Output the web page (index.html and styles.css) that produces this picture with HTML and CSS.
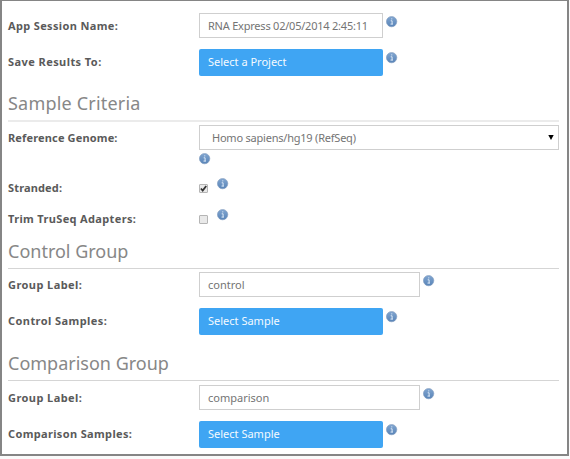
FILE: index.html
```
<!DOCTYPE html>
<html lang="en">
<head>
<meta charset="utf-8">
<title>RNA Express</title>
<link rel="stylesheet" href="styles.css">
</head>
<body>
<svg class="defs" width="0" height="0">
  <defs>
    <linearGradient id="ball" x1="0" y1="0" x2="0" y2="1">
      <stop offset="0" stop-color="#82a6d0"/>
      <stop offset="1" stop-color="#5884b8"/>
    </linearGradient>
    <symbol id="info" viewBox="0 0 12 12">
      <circle cx="5.6" cy="5.6" r="5.2" fill="url(#ball)" stroke="#7f9abd" stroke-width=".6"/>
      <path d="M4.7 4.8h1.4v3.2M4.5 8.1h2.5M5.2 2.9h1.1" fill="none" stroke="#dce9f7" stroke-width="1"/>
    </symbol>
  </defs>
</svg>
<form class="panel">
  <div class="row">
    <span class="label">App Session Name:</span>
    <div class="field short"><span class="tight">RNA Express 02/05/2014 2:45:11</span></div>
    <svg class="info"><use href="#info"/></svg>
  </div>
  <div class="row action">
    <span class="label wide">Save Results To:</span>
    <div class="button">Select a Project</div>
    <svg class="info"><use href="#info"/></svg>
  </div>

  <h2 class="first">Sample Criteria</h2>
  <div class="row select-row">
    <span class="label narrow">Reference Genome:</span>
    <div class="field select"><span class="tight">Homo sapiens/hg19 (RefSeq)</span><svg class="arrow" viewBox="0 0 6 5"><path d="M.3 0h5.4L3 5z"/></svg></div>
  </div>
  <div class="hint"><svg class="info"><use href="#info"/></svg></div>
  <div class="row check">
    <span class="label narrow">Stranded:</span>
    <span class="box"><svg viewBox="0 0 9 9"><path d="M1.9 4.5l1.8 2L7.2 2" fill="none" stroke="#333" stroke-width="1.8"/></svg></span>
    <svg class="info"><use href="#info"/></svg>
  </div>
  <div class="row check last">
    <span class="label">Trim TruSeq Adapters:</span>
    <span class="box"></span>
    <svg class="info"><use href="#info"/></svg>
  </div>

  <h2 class="second">Control Group</h2>
  <div class="row">
    <span class="label wide">Group Label:</span>
    <div class="field">control</div>
    <svg class="info"><use href="#info"/></svg>
  </div>
  <div class="row action">
    <span class="label wide">Control Samples:</span>
    <div class="button">Select Sample</div>
    <svg class="info"><use href="#info"/></svg>
  </div>

  <h2 class="third">Comparison Group</h2>
  <div class="row">
    <span class="label wide">Group Label:</span>
    <div class="field">comparison</div>
    <svg class="info"><use href="#info"/></svg>
  </div>
  <div class="row action">
    <span class="label">Comparison Samples:</span>
    <div class="button">Select Sample</div>
    <svg class="info"><use href="#info"/></svg>
  </div>
</form>
</body>
</html>
```
FILE: styles.css
```
* { box-sizing: border-box; }
body {
  margin: 0;
  background: #fafafa;
  font-family: "Noto Sans", "Open Sans", sans-serif;
  font-size: 11px;
  color: #747474;
}
.defs { display: block; }
.panel {
  width: 569px;
  height: 456px;
  padding: 12px 8px 0 6px;
  background: #fff;
  border: 2px solid #858585;
  border-top-width: 1px;
}
.row {
  display: flex;
  height: 25px;
  white-space: nowrap;
}
.label {
  width: 191px;
  line-height: 25px;
  font-weight: 700;
  letter-spacing: .35px;
  color: #5a5a5a;
}
.wide { letter-spacing: .43px; }
.narrow { letter-spacing: .15px; }
.tight { letter-spacing: -.22px; }
.field {
  display: flex;
  align-items: center;
  width: 221px;
  height: 25px;
  padding-left: 8px;
  border: 1px solid #cfcfcf;
  background: #fff;
}
.short { width: 184px; }
.select {
  width: 360px;
  padding: 0 4px 0 12px;
  justify-content: space-between;
}
.arrow { width: 6px; height: 5px; }
.action { height: 27px; margin-top: 11px; }
.button {
  width: 184px;
  padding-left: 9px;
  line-height: 26px;
  border-radius: 2px;
  background: #3fa5f3;
  color: #f4faff;
}
.info { width: 12px; height: 12px; margin: 3px 0 0 3px; flex: none; }
.hint { height: 25px; padding-top: 3px; }
.hint .info { display: block; margin: 0 0 0 191px; }
h2 {
  margin: 0 0 3px;
  border-bottom: 1px solid #d5d5d5;
  font-size: 18px;
  line-height: 24px;
  font-weight: 400;
  color: #878787;
  white-space: nowrap;
}
.first {
  height: 46px;
  padding-top: 15px;
  border-bottom: 2px solid #ebebeb;
  letter-spacing: .2px;
}
.second { height: 33px; padding-top: 3px; }
.third { height: 46px; padding-top: 16px; margin-bottom: 4px; }
.check { height: 31px; }
.last { height: 30px; }
.box {
  width: 9px;
  height: 9px;
  margin-top: 9px;
  border: 1px solid #b5b5b5;
  border-radius: 1px;
  background: #e9e9e9;
}
.box svg { display: block; width: 9px; height: 9px; margin: -1px; }
.check .info { margin: 3px 0 0 9px; }
```
